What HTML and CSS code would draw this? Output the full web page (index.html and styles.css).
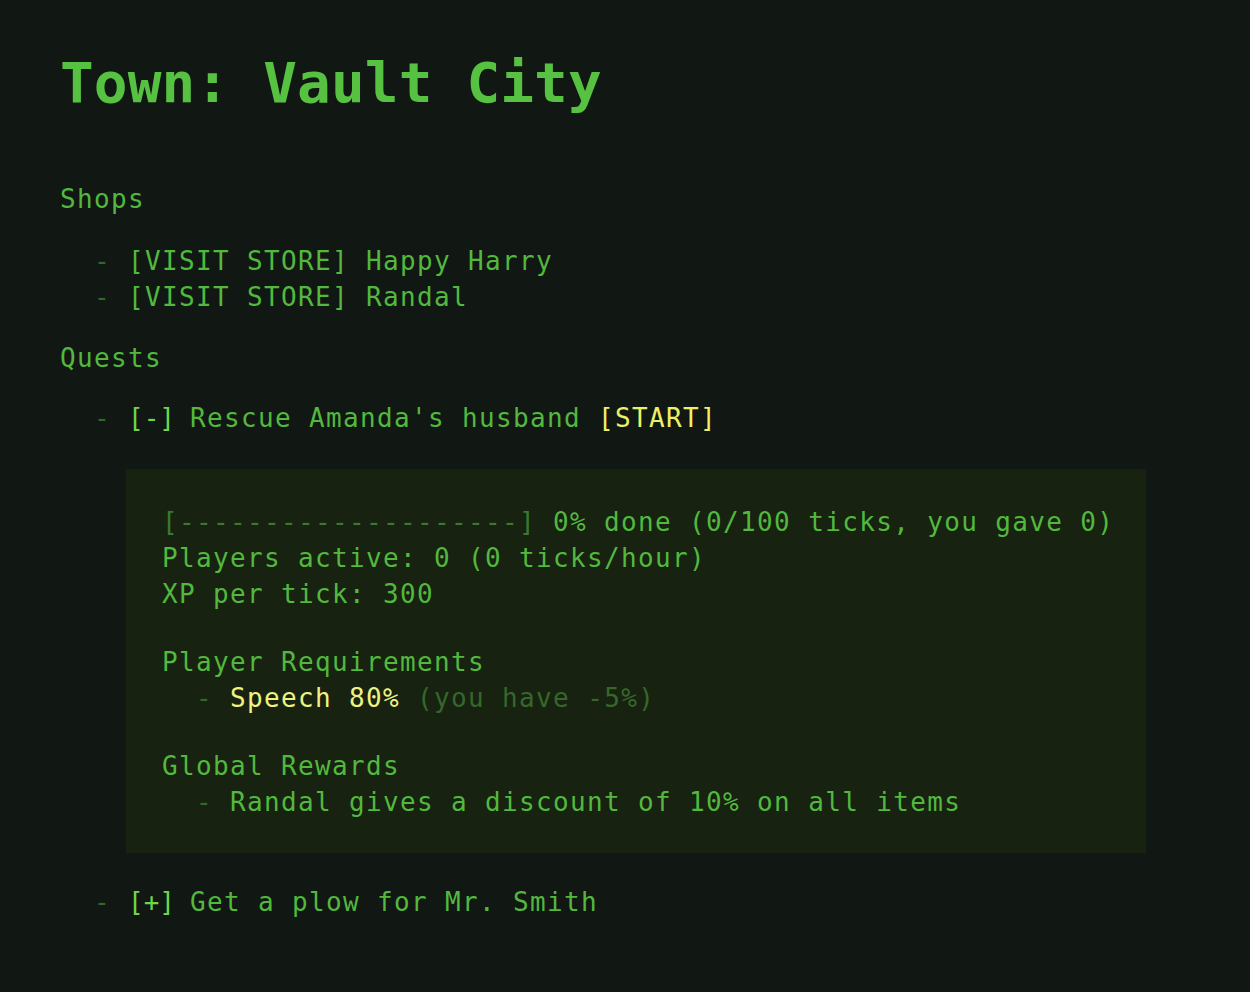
FILE: index.html
```html
<!DOCTYPE html>
<html lang="en">
<head>
<meta charset="utf-8">
<title>Town: Vault City</title>
<link rel="stylesheet" href="styles.css">
</head>
<body>
<main class="page">
  <h1 class="title">Town: Vault City</h1>

  <section class="section">
    <h2 class="heading">Shops</h2>
    <ul class="list">
      <li class="item"><span class="dash">-</span> <span class="action">[VISIT STORE]</span> Happy Harry</li>
      <li class="item"><span class="dash">-</span> <span class="action">[VISIT STORE]</span> Randal</li>
    </ul>
  </section>

  <section class="section">
    <h2 class="heading">Quests</h2>
    <ul class="list quests">
      <li class="item quest">
        <div class="quest-line"><span class="dash">-</span> <span class="toggle">[-]</span> Rescue Amanda's husband <span class="start">[START]</span></div>
        <div class="quest-detail">
          <div class="block">
            <div class="line"><span class="bar">[--------------------]</span> 0% done (0/100 ticks, you gave 0)</div>
            <div class="line">Players active: 0 (0 ticks/hour)</div>
            <div class="line">XP per tick: 300</div>
          </div>
          <div class="block">
            <div class="line">Player Requirements</div>
            <div class="line sub"><span class="dash">-</span> <span class="req">Speech 80%</span> <span class="muted">(you have -5%)</span></div>
          </div>
          <div class="block">
            <div class="line">Global Rewards</div>
            <div class="line sub"><span class="dash">-</span> Randal gives a discount of 10% on all items</div>
          </div>
        </div>
      </li>
      <li class="item quest-closed"><span class="dash">-</span> <span class="toggle">[+]</span> Get a plow for Mr. Smith</li>
    </ul>
  </section>
</main>
</body>
</html>
```

FILE: styles.css
```css
html, body {
  margin: 0;
  padding: 0;
  background: #111712;
}

.page {
  padding: 49px 60px 40px 60px;
  font-family: "DejaVu Sans Mono", "Liberation Mono", monospace;
  color: #52b83e;
  font-size: 26px;
  line-height: 36px;
  letter-spacing: 1.35px;
}

.title {
  margin: 0 0 65px 0;
  font-size: 56px;
  line-height: 67px;
  font-weight: bold;
  letter-spacing: 0.15px;
  color: #57c242;
}

.heading {
  margin: 0;
  font-size: 26px;
  font-weight: normal;
  line-height: 36px;
  color: #52b83e;
}

.section {
  margin: 0 0 25px 0;
}

.list {
  list-style: none;
  margin: 26px 0 0 0;
  padding: 0;
}

.list.quests {
  margin-top: 24px;
}

.item {
  padding-left: 34px;
  white-space: nowrap;
}

.dash {
  color: #2f6a27;
}

.toggle {
  color: #6fd64b;
  letter-spacing: 0;
  margin-right: -2px;
}

.start {
  color: #ecf066;
}

.quest-detail {
  margin: 33px 0 31px 32px;
  width: 1020px;
  box-sizing: border-box;
  padding: 35px 30px 33px 36px;
  background: #172210;
}

.block {
  margin-bottom: 32px;
}

.block:last-child {
  margin-bottom: 0;
}

.line {
  white-space: nowrap;
}

.sub {
  padding-left: 34px;
}

.bar {
  color: #3a7a2f;
}

.req {
  color: #eef283;
}

.muted {
  color: #36672a;
}
```
